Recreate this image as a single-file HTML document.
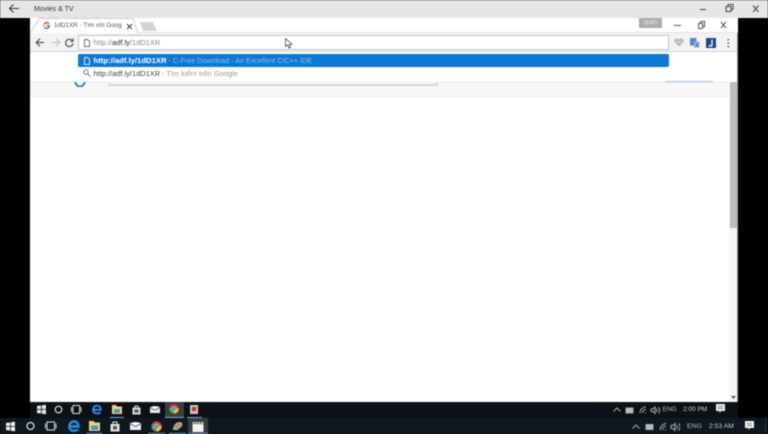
<!DOCTYPE html>
<html><head><meta charset="utf-8">
<style>
html,body{margin:0;padding:0;width:768px;height:434px;overflow:hidden;background:#000}
*{box-sizing:border-box}
div,span,svg{position:absolute}
.t{font-family:"Liberation Sans","Noto Sans CJK SC",sans-serif;white-space:nowrap;line-height:12px}
.u{height:1px;background:#6fa8d8}
#all{left:0;top:0;width:768px;height:434px;filter:blur(.4px);overflow:hidden}
</style></head><body>
<div id="all">
<!-- movies titlebar -->
<div style="left:0;top:0;width:768px;height:18px;background:#e6e6e6"></div>
<svg style="left:8px;top:3px" width="12" height="11" viewBox="0 0 12 11" fill="none" stroke="#333" stroke-width="1"><path d="M1.500 5.500H11M5.500 1.500L1.500 5.500L5.500 9.500"/></svg>
<div class="t" style="left:34px;top:3.500px;font-size:7px;color:#333">Movies &amp; TV</div>
<svg style="left:685px;top:3px" width="80" height="12" viewBox="0 0 80 12" fill="none" stroke="#444" stroke-width="1"><path d="M15 6.500H21"/><path d="M41 3.500h5v5h-5zM43 3.500V1.500h5v5h-2"/><path d="M73.500 2.500l-5.500 6.500M68 2.500l5.500 6.500"/></svg>

<!-- chrome -->
<div style="left:30px;top:18px;width:708px;height:384px;background:#fff"></div>
<div style="left:30px;top:32px;width:708px;height:1px;background:#e2e2e2"></div>
<!-- tab -->
<svg style="left:30px;top:18px" width="130" height="16" viewBox="0 0 130 16"><path d="M1 15L9 0.500H103L108 15" fill="#fff" stroke="#cfcfcf"/><path d="M3 15H106" stroke="#fff" stroke-width="2"/><path d="M110 4H123L127 13H113Z" fill="#d4d4d4"/></svg>
<svg style="left:43px;top:22px" width="7" height="7" viewBox="0 0 14 14" fill="none" stroke-width="3"><path d="M12 3A6 6 0 0 0 2.500 4" stroke="#e84335"/><path d="M2.500 4A6 6 0 0 0 3 11" stroke="#fbbc05"/><path d="M3 11A6 6 0 0 0 12 10.500" stroke="#34a853"/><path d="M12 10.500A6 6 0 0 0 13 7H7" stroke="#4285f4"/></svg>
<div class="t" style="left:54px;top:20px;font-size:6.300px;color:#555;width:68px;overflow:hidden">1dD1XR - Tìm với Google</div>
<svg style="left:125.500px;top:22.500px" width="7" height="7" viewBox="0 0 7 7" stroke="#444" stroke-width="1"><path d="M1 1L6 6M6 1L1 6"/></svg>
<div class="t" style="left:639px;top:18px;width:23px;height:10px;background:#adadad;color:#e8e8e8;font-size:6px;text-align:center;line-height:10px">quản</div>
<svg style="left:670px;top:19px" width="62" height="12" viewBox="0 0 62 12" fill="none" stroke="#555" stroke-width="1"><path d="M4 6.500H11"/><path d="M28.500 4.500h4v5h-4zM30.500 4.500V2.500h4v5h-2"/><path d="M51 3l5 6M56 3l-5 6"/></svg>

<!-- toolbar -->
<div style="left:30px;top:33px;width:708px;height:18px;background:#f3f3f3"></div>
<div style="left:30px;top:51px;width:708px;height:1px;background:#d4d4d4"></div>
<svg style="left:35px;top:37px" width="40" height="11" viewBox="0 0 40 11" fill="none" stroke-width="1.200"><path d="M1.500 5.500H9M5 1.700L1.200 5.500L5 9.300" stroke="#555"/><path d="M17 5.500H24.500M21 1.700L24.800 5.500L21 9.300" stroke="#c6c6c6"/><path d="M37.200 3.500A3.700 3.700 0 1 0 38 6.500" stroke="#555"/><path d="M38 1.500V4.300H35.200" stroke="#555"/></svg>
<div style="left:78px;top:35px;width:591px;height:15px;background:#fff;border:1px solid #c4c4c4"></div>
<svg style="left:84px;top:39px" width="6" height="8" viewBox="0 0 6 8" fill="none" stroke="#777"><path d="M.5.500H3.500L5.500 2.500V7.500H.5Z"/></svg>
<div class="t" style="left:93.500px;top:37px;font-size:7.450px;color:#888">http://<span style="position:static;color:#333">adf.ly</span>/1dD1XR</div>
<!-- extensions -->
<svg style="left:674px;top:38px" width="10" height="9" viewBox="0 0 10 9"><path d="M5 8.500L.8 4.300C-.5 2.500 1 .5 2.700 .5C3.800 .5 4.500 1 5 1.800C5.500 1 6.200 .5 7.300 .5C9 .5 10.500 2.500 9.200 4.300Z" fill="#b8b8b8"/><path d="M2.500 4H7.500" stroke="#e6e6e6"/></svg>
<svg style="left:690px;top:38px" width="10" height="10" viewBox="0 0 10 10"><rect x="0" y="0" width="6.500" height="7.500" rx="1" fill="#4a86e8"/><rect x="4" y="3.500" width="5.500" height="6" fill="#9cb6d8"/><path d="M5.500 5L8.500 9M8.500 5L5.500 9" stroke="#4a6a90" stroke-width=".7"/></svg>
<div style="left:706px;top:38px;width:10px;height:10px;background:#1c4a80"></div>
<svg style="left:706px;top:38px" width="10" height="10" viewBox="0 0 10 10" fill="none" stroke="#fff" stroke-width="1.300"><path d="M6 1.500V7C6 8.500 3.500 8.500 3 7"/></svg>
<svg style="left:727px;top:39px" width="3" height="9" viewBox="0 0 3 9" fill="#555"><rect x=".5" y="0" width="1.500" height="1.500"/><rect x=".5" y="3.500" width="1.500" height="1.500"/><rect x=".5" y="7" width="1.500" height="1.500"/></svg>

<!-- page behind -->
<div style="left:30px;top:82px;width:700px;height:15px;background:#f8f8f8"></div>
<div style="left:30px;top:96px;width:700px;height:1px;background:#ebebeb"></div>
<div style="left:108px;top:82px;width:330px;height:4px;background:#fff;border-right:1px solid #ccc;border-bottom:2px solid #d4d4d4;border-left:1px solid #e0e0e0"></div>
<!-- omnibox dropdown -->
<div style="left:30px;top:52px;width:708px;height:30px;background:#fff"></div>
<div style="left:30px;top:81.500px;width:700px;height:1px;background:#e8e8e8"></div>
<svg style="left:74px;top:79px" width="12" height="8" viewBox="0 0 12 8" fill="none" stroke="#3b78e7" stroke-width="2"><path d="M1.500 3A4.500 4.500 0 0 0 10.500 3"/></svg>
<div style="left:665px;top:81px;width:48px;height:1px;background:#a8c6ee"></div>
<div style="left:78px;top:54px;width:591px;height:13px;background:#0a78d7;border-radius:1.500px"></div>
<svg style="left:84px;top:57px" width="6" height="8" viewBox="0 0 6 8" fill="none" stroke="#cfe4f7"><path d="M.5.500H3.500L5.500 2.500V7.500H.5Z"/></svg>
<div class="t" style="left:93.500px;top:55px;font-size:7.700px;color:#fff;font-weight:bold">http://adf.ly/1dD1XR<span style="position:static;font-weight:normal;color:#8cc0ec;font-size:7.200px"> - C-Free Download - An Excellent C/C++ IDE</span></div>
<svg style="left:83px;top:69px" width="8" height="8" viewBox="0 0 8 8" fill="none" stroke="#777" stroke-width="1"><circle cx="3" cy="3" r="2.200"/><path d="M4.700 4.700L7.500 7.500"/></svg>
<div class="t" style="left:93.500px;top:67.500px;font-size:7.450px;color:#444">http://adf.ly/1dD1XR<span style="position:static;color:#999;font-size:7.400px"> - Tìm kiếm trên Google</span></div>

<!-- scrollbar -->
<div style="left:729px;top:82px;width:9px;height:320px;background:#f5f5f5"></div>
<div style="left:730px;top:82px;width:7px;height:146px;background:#bdbdbd"></div>
<svg style="left:730px;top:395px" width="7" height="5" viewBox="0 0 7 5"><path d="M1 1H6L3.500 4Z" fill="#555"/></svg>
<div style="left:737px;top:33px;width:1px;height:369px;background:#9a9a9a"></div>

<!-- inner taskbar -->
<div style="left:30px;top:402px;width:708px;height:16px;background:#0c1118"></div>
<div style="left:165px;top:402px;width:19px;height:16px;background:#3a3d42"></div>
<svg style="left:35.500px;top:404px" width="11" height="11" viewBox="0 0 11 11" fill="#e8e8e8"><path d="M1 2L5 1.400V5H1ZM5.800 1.300L10 .7V5H5.800ZM1 5.800H5V9.500L1 9ZM5.800 5.800H10V10.300L5.800 9.700Z"/></svg>
<svg style="left:53px;top:404px" width="30" height="11" viewBox="0 0 30 11" fill="none" stroke="#ddd"><circle cx="5.500" cy="5.500" r="3.300" stroke-width="1.200"/><rect x="20" y="1.500" width="6.500" height="8"/><path d="M18.500 3V8M28 3V8"/></svg>
<svg style="left:92px;top:404px" width="10" height="11" viewBox="0 0 12 12" fill="none" stroke="#1f8fe6" stroke-width="2.400"><path d="M2 6.500H10.500C10.500 3 8.500 1.500 6 1.500C3 1.500 1.300 4 1.300 6.500C1.300 9.500 3.500 10.800 6 10.800C7.500 10.800 9 10.300 10.200 9.500"/></svg>
<svg style="left:112px;top:405px" width="10" height="9" viewBox="0 0 10 9"><path d="M0 0H4L5 1.500H10V9H0Z" fill="#f3d36b"/><rect x="2" y="4" width="6" height="4" fill="#3f9ad8"/></svg>
<div class="u" style="left:110px;top:417px;width:14px"></div>
<svg style="left:131.500px;top:405px" width="9" height="10" viewBox="0 0 9 10"><path d="M.5 2.500H8.500V9.500H.5Z" fill="#d8d8d8"/><path d="M3 3V1H6V3" fill="none" stroke="#d8d8d8"/><rect x="2.500" y="4.500" width="4" height="3" fill="#555"/></svg>
<svg style="left:150px;top:406px" width="10" height="7" viewBox="0 0 10 7"><rect y="1" width="10" height="6" fill="#e8e8e8"/><path d="M0 1L5 0L10 1L5 3.500Z" fill="#fff"/><path d="M0 1.500L5 4L10 1.500" fill="none" stroke="#555" stroke-width=".8"/></svg>
<svg style="left:169px;top:404px" width="10" height="10" viewBox="0 0 14 14"><circle cx="7" cy="7" r="6.500" fill="#e0483a"/><path d="M7 7L13.500 6A6.500 6.500 0 0 1 7 13.500Z" fill="#f4c20d"/><path d="M7 7V13.500A6.500 6.500 0 0 1 1.300 4Z" fill="#3aa757"/><circle cx="7" cy="7" r="3" fill="#e8e8e8"/><circle cx="7" cy="7" r="2.300" fill="#4285f4"/></svg>
<div style="left:190px;top:405px;width:8px;height:9px;background:#c9c3c3"></div>
<div style="left:192px;top:407px;width:4px;height:4px;background:#d9252a"></div>
<div class="u" style="left:165px;top:417px;width:19px"></div>
<div class="u" style="left:187px;top:417px;width:15px"></div>

<svg style="left:613px;top:405px" width="48" height="10" viewBox="0 0 48 10" fill="none" stroke="#aaa"><path d="M.5 6.500L4 3L7.500 6.500"/><rect x="13" y="3" width="7" height="5" fill="#bbb"/><path d="M27 8A6 6 0 0 1 33 2M29.500 8A3.500 3.500 0 0 1 33 4.500M32 8h1" /><path d="M38 4H40L42 2V8.500L40 6.500H38ZM43.500 3.500A3 3 0 0 1 43.500 7M45.500 2A5 5 0 0 1 45.500 8.500"/></svg>
<div class="t" style="left:662.500px;top:403.500px;font-size:6.500px;color:#bbb">ENG</div>
<div class="t" style="left:683px;top:403.500px;font-size:6.500px;color:#ccc">2:00 PM</div>
<svg style="left:716px;top:404px" width="9" height="10" viewBox="0 0 9 10"><path d="M0 0H9V7H5L3.500 9V7H0Z" fill="#eee"/><path d="M2 2.500H7M2 4.500H7" stroke="#666" stroke-width=".7"/></svg>

<!-- outer taskbar -->
<div style="left:0;top:418px;width:768px;height:16px;background:#0f1820"></div>
<div style="left:765px;top:418px;width:1px;height:16px;background:#2a3038"></div>
<div style="left:188px;top:418px;width:20px;height:16px;background:#383c42"></div>
<svg style="left:4.500px;top:420.500px" width="11" height="11" viewBox="0 0 11 11" fill="#f0f0f0"><path d="M1 2L5 1.400V5H1ZM5.800 1.300L10 .7V5H5.800ZM1 5.800H5V9.500L1 9ZM5.800 5.800H10V10.300L5.800 9.700Z"/></svg>
<svg style="left:25px;top:420px" width="33" height="12" viewBox="0 0 33 12" fill="none" stroke="#ddd"><circle cx="5.500" cy="6" r="3.500" stroke-width="1.200"/><rect x="22" y="2" width="7.500" height="8"/><path d="M20.500 3.500V8.500M31 3.500V8.500"/></svg>
<svg style="left:67.500px;top:420px" width="12" height="12" viewBox="0 0 12 12" fill="none" stroke="#1f8fe6" stroke-width="2.400"><path d="M2 6.500H10.500C10.500 3 8.500 1.500 6 1.500C3 1.500 1.300 4 1.300 6.500C1.300 9.500 3.500 10.800 6 10.800C7.500 10.800 9 10.300 10.200 9.500"/></svg>
<svg style="left:89px;top:421px" width="11" height="10" viewBox="0 0 11 10"><path d="M0 0H4.500L5.500 1.500H11V10H0Z" fill="#f3d36b"/><rect x="2" y="4.500" width="7" height="4.500" fill="#3f9ad8"/></svg>
<div class="u" style="left:86px;top:433px;width:16px"></div>
<svg style="left:110px;top:421px" width="10" height="11" viewBox="0 0 10 11"><path d="M.5 3H9.500V10.500H.5Z" fill="#e4e4e4"/><path d="M3 3.500V1H7V3.500" fill="none" stroke="#e4e4e4"/><rect x="3" y="5" width="4" height="3.500" fill="#555"/></svg>
<svg style="left:130px;top:422px" width="11" height="8" viewBox="0 0 11 8"><rect y="1" width="11" height="7" fill="#eee"/><path d="M0 1L5.500 0L11 1L5.500 4Z" fill="#fff"/><path d="M0 1.500L5.500 4.500L11 1.500" fill="none" stroke="#555" stroke-width=".8"/></svg>
<svg style="left:151px;top:420.500px" width="11" height="11" viewBox="0 0 14 14"><circle cx="7" cy="7" r="6.500" fill="#e0483a"/><path d="M7 7L13.500 6A6.500 6.500 0 0 1 7 13.500Z" fill="#f4c20d"/><path d="M7 7V13.500A6.500 6.500 0 0 1 1.300 4Z" fill="#3aa757"/><circle cx="7" cy="7" r="3" fill="#e8e8e8"/><circle cx="7" cy="7" r="2.300" fill="#4285f4"/></svg>
<div class="u" style="left:148px;top:433px;width:17px"></div>
<svg style="left:172px;top:421px" width="11" height="10" viewBox="0 0 11 10"><path d="M1 9C1 4 4 1 8 1C10 1 11 3 10 5L6 9Z" fill="#b8a88c"/><circle cx="4" cy="5" r="1" fill="#3a7fd0"/><circle cx="7" cy="3.500" r="1" fill="#d05a3a"/><circle cx="6" cy="7" r="1" fill="#4fa050"/></svg>
<div class="u" style="left:169px;top:433px;width:17px"></div>
<svg style="left:192px;top:421px" width="12" height="11" viewBox="0 0 12 11"><rect x=".5" y="3" width="11" height="8" fill="#f2f2f2"/><path d="M.5 1H11.500V2.500H.5Z" fill="#ddd"/><path d="M3 1L2.500 2.500M6 1L5.500 2.500M9 1L8.500 2.500" stroke="#333" stroke-width=".7"/></svg>
<div class="u" style="left:188px;top:433px;width:20px"></div>

<svg style="left:632px;top:421px" width="48" height="11" viewBox="0 0 48 11" fill="none" stroke="#aaa"><path d="M.5 7.500L4 4L7.500 7.500"/><rect x="14" y="3.500" width="7" height="5" fill="#bbb"/><path d="M28 9A7 7 0 0 1 34 2.500M30.500 9A4 4 0 0 1 34 5M33 9h1"/><path d="M39 4.500H41L43 2.500V9.500L41 7.500H39ZM44.500 4A3 3 0 0 1 44.500 8M46.500 2.500A5 5 0 0 1 46.500 9.500"/></svg>
<div class="t" style="left:687px;top:420.500px;font-size:6.800px;color:#bbb">ENG</div>
<div class="t" style="left:709px;top:420.500px;font-size:6.800px;color:#ccc">2:53 AM</div>
<svg style="left:745px;top:421px" width="9" height="10" viewBox="0 0 9 10"><path d="M0 0H9V7H5L3.500 9V7H0Z" fill="#f2f2f2"/><path d="M2 2.500H7M2 4.500H7" stroke="#666" stroke-width=".7"/></svg>

<!-- cursor -->
<svg style="left:285px;top:38px" width="8" height="11" viewBox="0 0 8 11"><path d="M.5.500V8.500L2.500 6.800L4 10L5.500 9.300L4.200 6.300H7Z" fill="#fff" stroke="#333" stroke-width=".7"/></svg>
</div>
</body></html>
